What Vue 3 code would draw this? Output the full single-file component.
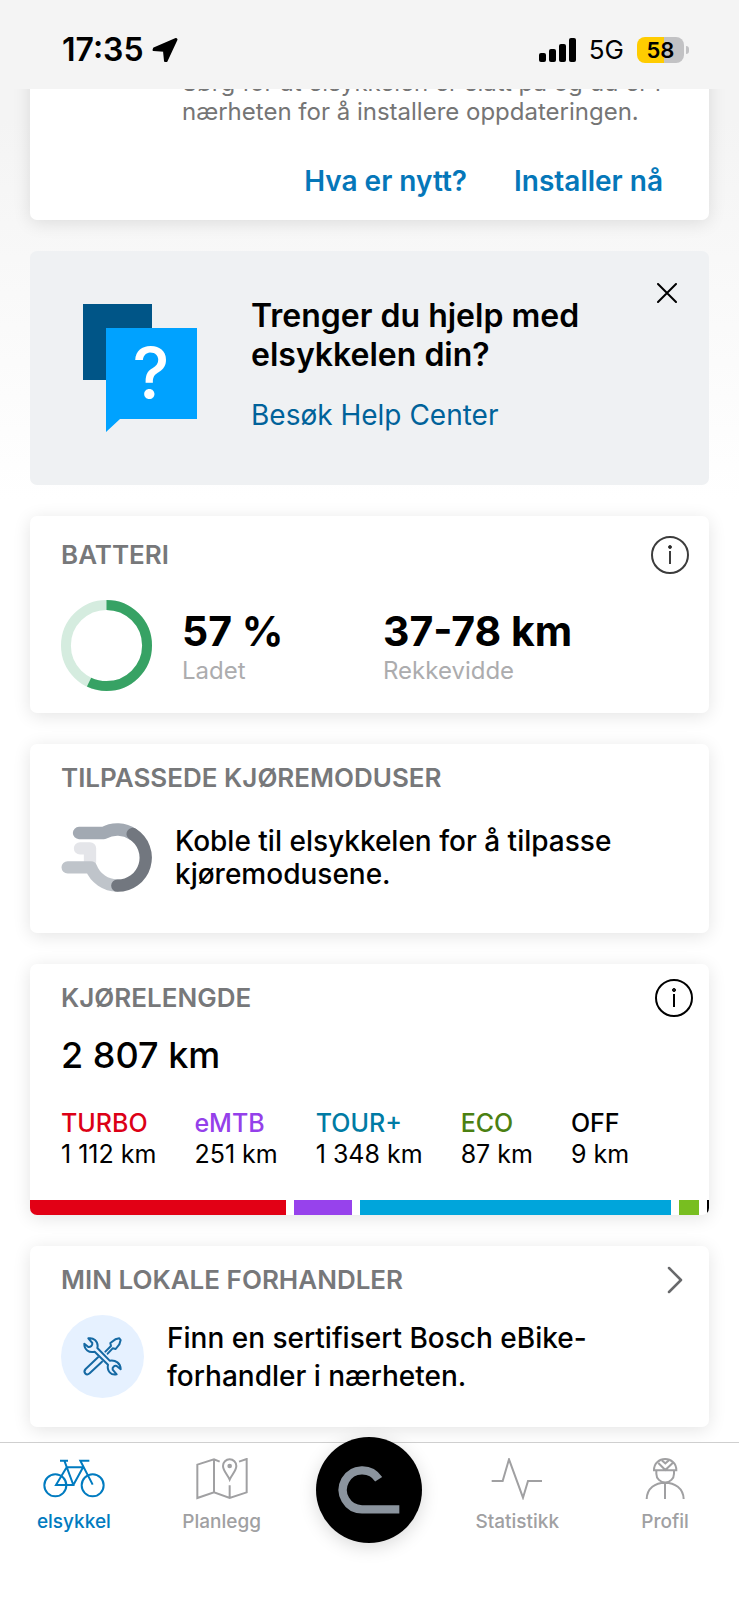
<script setup>
const modes = [
  { name: 'TURBO', km: 1112, text: '1 112 km', key: 'turbo' },
  { name: 'eMTB', km: 251, text: '251 km', key: 'emtb' },
  { name: 'TOUR+', km: 1348, text: '1 348 km', key: 'tour' },
  { name: 'ECO', km: 87, text: '87 km', key: 'eco' },
  { name: 'OFF', km: 9, text: '9 km', key: 'off' }
]
const charge = 57
const ringRadius = 41
const ringLength = 2 * Math.PI * ringRadius
const ringDash = `${(ringLength * charge) / 100} ${ringLength}`
</script>

<template>
  <div class="app">
    <header class="status">
      <div class="status-left">
        <span class="clock">17:35</span>
        <svg class="arrow" viewBox="0 0 26 26" aria-hidden="true">
          <path d="M24 2 2 11.500 1.500 13 12 13.800 13 24 14.500 24 24.500 2.500z" fill="#000" stroke="#000" stroke-width="2" stroke-linejoin="round" />
        </svg>
      </div>
      <div class="status-right">
        <svg class="signal" viewBox="0 0 38 24" aria-hidden="true">
          <rect x="0" y="15" width="7" height="9" rx="2" />
          <rect x="10" y="11" width="7" height="13" rx="2" />
          <rect x="20" y="6" width="7" height="18" rx="2" />
          <rect x="30" y="0" width="7" height="24" rx="2" />
        </svg>
        <span class="network">5G</span>
        <span class="battery"><span class="battery-level">58</span><span class="battery-nub"></span></span>
      </div>
    </header>

    <main class="content">
      <section class="card update">
        <p class="update-text">Sørg for at elsykkelen er slått på og du er i nærheten for å installere oppdateringen.</p>
        <div class="update-actions">
          <button type="button" class="text-button">Hva er nytt?</button>
          <button type="button" class="text-button">Installer nå</button>
        </div>
      </section>

      <section class="card help">
        <svg class="help-icon" viewBox="0 0 114 128" aria-hidden="true">
          <path d="M0 0h69v76H0z" fill="#005587" />
          <path d="M23 24h91v91H37L23 128z" fill="#00a2ff" />
          <text x="68" y="94" text-anchor="middle" class="help-mark">?</text>
        </svg>
        <div class="help-body">
          <h2 class="help-title">Trenger du hjelp med elsykkelen din?</h2>
          <a href="#help" class="help-link">Besøk Help Center</a>
        </div>
        <button type="button" class="icon-button" aria-label="Lukk">
          <svg class="close" viewBox="0 0 20 20"><path d="M1 1l18 18M19 1L1 19" fill="none" stroke="#000" stroke-width="2" stroke-linecap="round" /></svg>
        </button>
      </section>

      <section class="card charge">
        <div class="card-head">
          <h2 class="card-title">BATTERI</h2>
          <button type="button" class="icon-button" aria-label="Info om batteri">
            <svg class="info soft" viewBox="0 0 38 38">
              <circle cx="19" cy="19" r="18" /><path d="M19 15v13" /><circle class="dot" cx="19" cy="11" r="1.500" />
            </svg>
          </button>
        </div>
        <div class="charge-row">
          <svg class="ring" viewBox="0 0 92 92" aria-hidden="true">
            <circle cx="46" cy="46" :r="ringRadius" stroke="#d5ecdf" />
            <circle cx="46" cy="46" :r="ringRadius" stroke="#37a264" :stroke-dasharray="ringDash" transform="rotate(-90 46 46)" />
          </svg>
          <div class="stat">
            <span class="stat-value">57&nbsp;%</span>
            <span class="stat-label">Ladet</span>
          </div>
          <div class="stat">
            <span class="stat-value">37-78&nbsp;km</span>
            <span class="stat-label">Rekkevidde</span>
          </div>
        </div>
      </section>

      <section class="card custom">
        <div class="card-head"><h2 class="card-title">TILPASSEDE KJØREMODUSER</h2></div>
        <div class="custom-row">
          <svg class="mode-icon" viewBox="18 24 273 207" fill="none" stroke-width="37" aria-hidden="true">
            <path d="M75 100H105V142" stroke="#e4e5e9" stroke-linecap="round" stroke-linejoin="round" />
            <path d="M38 157H108A84 84 0 0 0 188 211" stroke="#bfc4ca" stroke-linecap="round" stroke-linejoin="round" />
            <path d="M72 54H146A84 84 0 0 1 234 58" stroke="#a2a9b2" stroke-linecap="round" stroke-linejoin="round" />
            <path d="M233 57A84 84 0 0 1 187 212" stroke="#72777f" stroke-linecap="round" />
          </svg>
          <p class="custom-text">Koble til elsykkelen for å tilpasse kjøremodusene.</p>
        </div>
      </section>

      <section class="card mileage">
        <div class="card-head">
          <h2 class="card-title">KJØRELENGDE</h2>
          <button type="button" class="icon-button" aria-label="Info om kjørelengde">
            <svg class="info" viewBox="0 0 38 38">
              <circle cx="19" cy="19" r="18" /><path d="M19 15v13" /><circle class="dot" cx="19" cy="11" r="1.500" />
            </svg>
          </button>
        </div>
        <p class="total">2&nbsp;807&nbsp;km</p>
        <dl class="modes">
          <div v-for="m in modes" :key="m.key" class="mode">
            <dt :class="['mode-name', m.key]">{{ m.name }}</dt>
            <dd class="mode-km">{{ m.text }}</dd>
          </div>
        </dl>
        <div class="bar" aria-hidden="true">
          <span v-for="m in modes" :key="m.key" :class="['segment', 'fill-' + m.key]" :style="{ flexGrow: m.km }"></span>
        </div>
      </section>

      <section class="card dealer">
        <div class="card-head">
          <h2 class="card-title">MIN LOKALE FORHANDLER</h2>
          <button type="button" class="icon-button" aria-label="Åpne forhandler">
            <svg class="chevron" viewBox="0 0 16 28"><path d="M2 2l12 12L2 26" fill="none" stroke="#68696b" stroke-width="2.500" stroke-linecap="round" stroke-linejoin="round" /></svg>
          </button>
        </div>
        <div class="dealer-row">
          <svg class="tools" viewBox="33 41 249 249" fill="none" stroke="#1569a3" stroke-width="6" stroke-linejoin="round" stroke-linecap="round" aria-hidden="true">
            <circle cx="157.500" cy="165.500" r="124.500" fill="#e6f1ff" stroke="none" />
            <path d="M115 111C131 108 143 119 143 134L142 140 179 178C197 175 212 186 212 204L200 194C193 192 186 198 188 205L200 219C183 223 170 209 174 190L134 151C117 156 102 144 103 127L115 137C122 138 128 132 127 125Z" />
            <path d="M166 151L183 134 181 125 196 114 208 111 212 116 208 129 197 143 188 141 173 157" />
            <path d="M144 168L107 203C98 213 109 225 119 216L156 181" />
          </svg>
          <p class="dealer-text">Finn en sertifisert Bosch eBike-forhandler i nærheten.</p>
        </div>
      </section>
    </main>

    <nav class="tabs">
      <a href="#ebike" class="tab active">
        <svg class="tab-icon" viewBox="126 84 192 126" aria-hidden="true">
          <circle cx="166" cy="166" r="33" /><circle cx="278" cy="166" r="33" />
          <path d="M180 92h24M193 92l27 73h-52l32-53h49M250 110l-30 55M268 92h-27l37 72" />
        </svg>
        <span>elsykkel</span>
      </a>
      <a href="#plan" class="tab">
        <svg class="tab-icon" viewBox="568 84 192 126" aria-hidden="true">
          <path d="M657 95L640 88 590 104V204L640 187 687 204 738 187V87L715 95M640 88V187M687 166V204" />
          <path d="M687 149C681 135 667 122 667 108A20 20 0 0 1 707 108C707 122 693 135 687 149Z" />
          <circle cx="687" cy="108" r="4" class="pin" />
        </svg>
        <span>Planlegg</span>
      </a>
      <button type="button" class="ride" aria-label="Start tur">
        <svg class="ride-icon" viewBox="5 20 318 318">
          <path d="M193 147A58.500 58.500 0 1 0 143 237H255" fill="none" stroke="#8b949e" stroke-width="25" />
        </svg>
      </button>
      <a href="#stats" class="tab">
        <svg class="tab-icon" viewBox="346 84 192 126" aria-hidden="true">
          <path d="M366 153h33L418 88 460 203 475 153h42" />
        </svg>
        <span>Statistikk</span>
      </a>
      <a href="#profile" class="tab">
        <svg class="tab-icon" viewBox="786 84 192 126" aria-hidden="true">
          <path d="M849 121C848 76 917 76 916 121ZM862 99l21 21 22-21" />
          <path d="M872 91l11 9 11-9" />
          <path d="M856 121V131A26 26 0 0 0 909 131V121M827 207C828 174 853 158 882 158S937 174 938 207M882 158V207" />
        </svg>
        <span>Profil</span>
      </a>
    </nav>
  </div>
</template>

<style>
html,
body {
  margin: 0;
  background: #fff;
}
</style>

<style scoped>
.app {
  display: flex;
  flex-direction: column;
  min-height: 100vh;
  box-sizing: border-box;
  font-family: Inter, "Liberation Sans", sans-serif;
  color: #000;
  background: linear-gradient(#f4f4f4 120px, #fff 500px);
}
h2,
p,
dl,
dd {
  margin: 0;
}
button {
  padding: 0;
  border: 0;
  background: none;
  font-family: inherit;
  cursor: pointer;
}
a {
  text-decoration: none;
}
svg {
  display: block;
  flex: none;
}
.status {
  display: flex;
  justify-content: space-between;
  align-items: center;
  height: 89px;
  padding: 10px 50px 0 62px;
  box-sizing: border-box;
  background: #f4f4f4;
  position: relative;
  z-index: 1;
}
.status-left,
.status-right {
  display: flex;
  align-items: center;
}
.status-left {
  gap: 8px;
}
.clock {
  font-size: 32px;
  line-height: 40px;
  font-weight: 600;
}
.arrow {
  width: 26px;
  height: 26px;
}
.signal {
  width: 38px;
  height: 24px;
}
.network {
  margin: 0 13px 0 12px;
  font-size: 26px;
  line-height: 32px;
}
.battery {
  display: flex;
  align-items: center;
  gap: 2px;
}
.battery-level {
  width: 47px;
  border-radius: 8px;
  background: linear-gradient(90deg, #ffcc00 58%, #c2c2c4 58%);
  font-size: 22px;
  line-height: 26px;
  font-weight: 600;
  text-align: center;
}
.battery-nub {
  width: 3px;
  height: 8px;
  border-radius: 0 3px 3px 0;
  background: #c2c2c4;
}
.content {
  flex: 1;
  display: flex;
  flex-direction: column;
  gap: 31px;
  margin-top: -30px;
  padding: 0 30px 15px;
}
.card {
  border-radius: 7px;
  background: #fff;
  box-shadow: 0 3px 18px rgba(0, 0, 0, 0.11);
}
.update {
  padding: 9px 46px 22px 152px;
}
.update-text {
  margin-right: -24px;
  font-size: 24px;
  line-height: 29px;
  color: #757575;
}
.update-actions {
  display: flex;
  justify-content: flex-end;
  gap: 47px;
  margin-top: 38px;
}
.text-button {
  font-size: 28px;
  line-height: 34px;
  font-weight: 600;
  color: #0577b9;
}
.help {
  display: flex;
  align-items: flex-start;
  padding: 32px 32px 53px 53px;
  background: #eff1f3;
  box-shadow: none;
}
.help-icon {
  width: 114px;
  height: 128px;
  margin-top: 21px;
}
.help-mark {
  font-size: 70px;
  font-weight: 500;
  fill: #fff;
}
.help-body {
  flex: 1;
  margin: 13px 30px 0 54px;
}
.help-title {
  font-size: 32px;
  line-height: 39px;
  font-weight: 600;
}
.help-link {
  display: inline-block;
  margin-top: 24px;
  font-size: 28px;
  line-height: 34px;
  color: #00629a;
}
.close {
  width: 20px;
  height: 20px;
}
.card-head {
  display: flex;
  align-items: center;
  justify-content: space-between;
  height: 32px;
}
.card-title {
  font-size: 26px;
  line-height: 32px;
  font-weight: 600;
  color: #77787a;
}
.info {
  width: 38px;
  height: 38px;
  fill: none;
  stroke: #000;
  stroke-width: 2;
}
.info.soft {
  stroke: #3c3c3c;
}
.info .dot {
  stroke-width: 1;
  fill: #222;
}
.charge {
  padding: 23px 20px 22px 31px;
}
.charge-row {
  display: flex;
  align-items: center;
  gap: 30px;
  margin-top: 29px;
}
.ring {
  width: 91px;
  height: 91px;
  fill: none;
  stroke-width: 10;
}
.stat {
  display: flex;
  flex-direction: column;
  gap: 2px;
  min-width: 171px;
}
.stat-value {
  font-size: 41px;
  line-height: 48px;
  font-weight: 700;
}
.stat-label {
  font-size: 24px;
  line-height: 28px;
  color: #acacae;
}
.custom {
  padding: 18px 31px 41px;
}
.custom-row {
  display: flex;
  align-items: center;
  gap: 23px;
  margin-top: 29px;
}
.mode-icon {
  width: 91px;
  height: 69px;
}
.custom-text {
  font-size: 28px;
  line-height: 33px;
  font-weight: 500;
}
.mileage {
  padding-top: 18px;
  overflow: hidden;
}
.mileage .card-head {
  padding: 0 16px 0 31px;
}
.total {
  margin: 19px 31px 0;
  font-size: 36px;
  line-height: 44px;
  font-weight: 500;
}
.modes {
  display: flex;
  gap: 38px;
  padding: 31px 31px 30px;
}
.mode-name,
.mode-km {
  font-size: 25px;
  line-height: 31px;
  white-space: nowrap;
}
.mode-name {
  font-weight: 500;
}
.turbo {
  color: #dc0016;
}
.emtb {
  color: #9440ea;
}
.tour {
  color: #007ba4;
}
.eco {
  color: #4b8012;
}
.bar {
  display: flex;
  gap: 8px;
  height: 15px;
}
.segment {
  flex: 1 1 0;
}
.fill-turbo {
  background: #e20015;
}
.fill-emtb {
  background: #9742ec;
}
.fill-tour {
  background: #00a5db;
}
.fill-eco {
  background: #78be20;
}
.fill-off {
  background: #000;
}
.dealer {
  padding: 18px 26px 29px 31px;
}
.chevron {
  width: 16px;
  height: 28px;
}
.dealer-row {
  display: flex;
  align-items: center;
  gap: 23px;
  margin-top: 19px;
}
.tools {
  width: 83px;
  height: 83px;
}
.dealer-text {
  max-width: 440px;
  font-size: 28px;
  line-height: 38px;
  font-weight: 500;
}
.tabs {
  display: grid;
  grid-template-columns: repeat(5, 1fr);
  justify-items: center;
  align-items: start;
  height: 158px;
  box-sizing: border-box;
  border-top: 1px solid #cfcfcf;
  background: #fff;
  position: relative;
}
.tab {
  display: flex;
  flex-direction: column;
  align-items: center;
  gap: 10px;
  padding-top: 15px;
  font-size: 19px;
  line-height: 24px;
  font-weight: 500;
  color: #a0a0a2;
}
.tab.active {
  color: #007bc0;
}
.tab-icon {
  width: 64px;
  height: 42px;
  fill: none;
  stroke: currentColor;
  stroke-width: 6;
}
.pin {
  fill: currentColor;
}
.ride {
  width: 106px;
  height: 106px;
  margin-top: -6px;
  border-radius: 50%;
  background: #000;
  box-shadow: 0 4px 18px rgba(0, 0, 0, 0.15);
}
.ride-icon {
  width: 106px;
  height: 106px;
}
</style>
